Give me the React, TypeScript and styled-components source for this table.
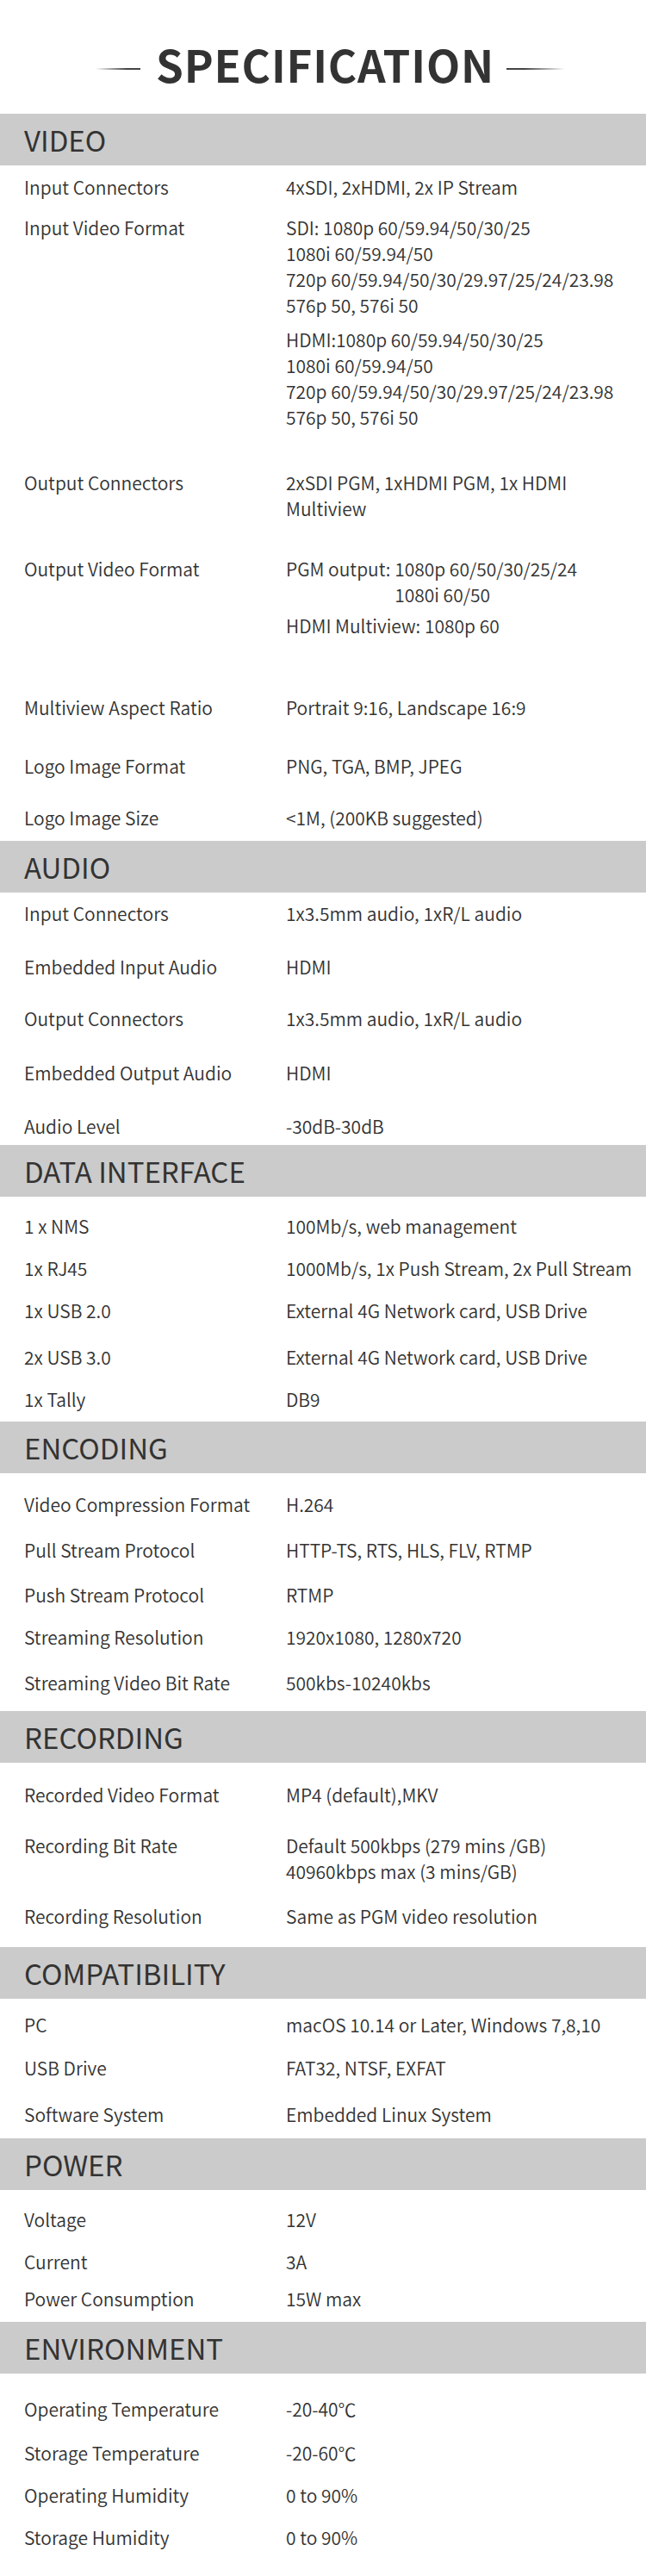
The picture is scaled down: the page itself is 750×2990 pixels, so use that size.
import React from "react";
import styled, { createGlobalStyle } from "styled-components";

const GlobalStyle = createGlobalStyle`
  html, body {
    margin: 0;
    padding: 0;
    background: #ffffff;
  }
  body {
    font-family: "Noto Sans CJK SC", "Noto Sans", "Liberation Sans", sans-serif;
    color: #333333;
  }
`;

const Page = styled.div`
  width: 750px;
  height: 2990px;
  background: #ffffff;
  overflow: hidden;
`;

const Header = styled.header`
  height: 132px;
  box-sizing: border-box;
  padding-top: 49px;
  padding-left: 17px;
  display: flex;
  justify-content: center;
  align-items: flex-start;
`;

const Title = styled.h1`
  margin: 0;
  font-size: 51px;
  line-height: 51px;
  font-weight: 700;
  color: #333333;
  letter-spacing: 0.8px;
`;

const Rule = styled.span<{ $side: "left" | "right" }>`
  display: block;
  margin-top: 30px;
  margin-right: ${(p) => (p.$side === "left" ? "18px" : "0")};
  margin-left: ${(p) => (p.$side === "right" ? "14px" : "0")};
  height: 2px;
  width: ${(p) => (p.$side === "left" ? "52px" : "68px")};
  background: ${(p) =>
    p.$side === "left"
      ? "linear-gradient(to right, rgba(60,60,60,0), #444 70%)"
      : "linear-gradient(to right, #444 30%, rgba(60,60,60,0))"};
`;

const Section = styled.section<{ $end: number }>`
  padding-bottom: ${(p) => p.$end}px;
`;

const Band = styled.h2`
  margin: 0;
  height: 60px;
  box-sizing: border-box;
  padding-left: 28px;
  background: #cbcbcb;
  font-size: 33px;
  line-height: 60px;
  font-weight: 400;
  color: #333333;
`;

const Row = styled.div<{ $gap: number }>`
  display: grid;
  grid-template-columns: 304px 1fr;
  padding-left: 28px;
  margin-top: ${(p) => p.$gap}px;
  font-size: 21px;
  line-height: 30px;
  font-weight: 350;
  color: #333333;
`;

const Label = styled.div`
  white-space: nowrap;
`;

const Value = styled.div`
  display: flex;
  flex-direction: column;
`;

const Block = styled.div<{ $gap?: number }>`
  margin-top: ${(p) => p.$gap ?? 0}px;
  white-space: nowrap;
`;

const Line = styled.div``;

const Split = styled.div<{ $gap?: number }>`
  display: flex;
  margin-top: ${(p) => p.$gap ?? 0}px;
  white-space: pre;
`;

type Spec = {
  label: string;
  gap: number;
  value: React.ReactNode;
};

type SectionData = {
  title: string;
  end: number;
  rows: Spec[];
};

const lines = (arr: string[]) => arr.map((t) => <Line key={t}>{t}</Line>);

const sections: SectionData[] = [
  {
    title: "VIDEO",
    end: 12,
    rows: [
      { label: "Input Connectors", gap: 10, value: "4xSDI, 2xHDMI, 2x IP Stream" },
      {
        label: "Input Video Format",
        gap: 17,
        value: (
          <>
            <Block>
              {lines([
                "SDI: 1080p 60/59.94/50/30/25",
                "1080i 60/59.94/50",
                "720p 60/59.94/50/30/29.97/25/24/23.98",
                "576p 50, 576i 50",
              ])}
            </Block>
            <Block $gap={10}>
              {lines([
                "HDMI:1080p 60/59.94/50/30/25",
                "1080i 60/59.94/50 ",
                "720p 60/59.94/50/30/29.97/25/24/23.98 ",
                "576p 50, 576i 50 ",
              ])}
            </Block>
          </>
        ),
      },
      {
        label: "Output Connectors",
        gap: 46,
        value: <Block>{lines(["2xSDI PGM, 1xHDMI PGM, 1x HDMI", "Multiview"])}</Block>,
      },
      {
        label: "Output Video Format",
        gap: 40,
        value: (
          <>
            <Split>
              <span>PGM output: </span>
              <span>
                <Line>1080p 60/50/30/25/24</Line>
                <Line>1080i 60/50</Line>
              </span>
            </Split>
            <Block $gap={6}>HDMI Multiview: 1080p 60</Block>
          </>
        ),
      },
      { label: "Multiview Aspect Ratio", gap: 65, value: "Portrait 9:16, Landscape 16:9" },
      { label: "Logo Image Format", gap: 38, value: "PNG, TGA, BMP, JPEG" },
      { label: "Logo Image Size", gap: 30, value: "<1M, (200KB suggested)" },
    ],
  },
  {
    title: "AUDIO",
    end: 7,
    rows: [
      { label: "Input Connectors", gap: 9, value: "1x3.5mm audio, 1xR/L audio" },
      { label: "Embedded Input Audio", gap: 32, value: "HDMI" },
      { label: "Output Connectors", gap: 30, value: "1x3.5mm audio, 1xR/L audio" },
      { label: "Embedded Output Audio", gap: 33, value: "HDMI" },
      { label: "Audio Level", gap: 32, value: "-30dB-30dB" },
    ],
  },
  {
    title: "DATA INTERFACE",
    end: 11,
    rows: [
      { label: "1 x NMS", gap: 19, value: "100Mb/s, web management" },
      { label: "1x RJ45", gap: 19, value: "1000Mb/s, 1x Push Stream, 2x Pull Stream" },
      { label: "1x USB 2.0", gap: 19, value: "External 4G Network card, USB Drive" },
      { label: "2x USB 3.0", gap: 24, value: "External 4G Network card, USB Drive" },
      { label: "1x Tally", gap: 19, value: "DB9" },
    ],
  },
  {
    title: "ENCODING",
    end: 18,
    rows: [
      { label: "Video Compression Format", gap: 21, value: "H.264" },
      { label: "Pull Stream Protocol", gap: 23, value: "HTTP-TS, RTS, HLS, FLV, RTMP" },
      { label: "Push Stream Protocol", gap: 22, value: "RTMP" },
      { label: "Streaming Resolution", gap: 19, value: "1920x1080, 1280x720" },
      { label: "Streaming Video Bit Rate", gap: 23, value: "500kbs-10240kbs" },
    ],
  },
  {
    title: "RECORDING",
    end: 21,
    rows: [
      { label: "Recorded Video Format", gap: 22, value: "MP4 (default),MKV" },
      {
        label: "Recording Bit Rate",
        gap: 29,
        value: <Block>{lines(["Default 500kbps (279 mins /GB)", "40960kbps max (3 mins/GB)"])}</Block>,
      },
      { label: "Recording Resolution", gap: 22, value: "Same as PGM video resolution" },
    ],
  },
  {
    title: "COMPATIBILITY",
    end: 13,
    rows: [
      { label: "PC", gap: 15, value: "macOS 10.14 or Later, Windows 7,8,10" },
      { label: "USB Drive", gap: 20, value: "FAT32, NTSF, EXFAT" },
      { label: "Software System", gap: 24, value: "Embedded Linux System" },
    ],
  },
  {
    title: "POWER",
    end: 12,
    rows: [
      { label: "Voltage", gap: 19, value: "12V" },
      { label: "Current", gap: 19, value: "3A" },
      { label: "Power Consumption", gap: 13, value: "15W max" },
    ],
  },
  {
    title: "ENVIRONMENT",
    end: 30,
    rows: [
      { label: "Operating Temperature", gap: 26, value: "-20-40℃" },
      { label: "Storage Temperature", gap: 21, value: "-20-60℃" },
      { label: "Operating Humidity", gap: 19, value: "0 to 90%" },
      { label: "Storage Humidity", gap: 19, value: "0 to 90%" },
    ],
  },
];

export default function App() {
  return (
    <>
      <GlobalStyle />
      <Page>
        <Header>
          <Rule $side="left" />
          <Title>SPECIFICATION</Title>
          <Rule $side="right" />
        </Header>
        {sections.map((s) => (
          <Section key={s.title} $end={s.end}>
            <Band>{s.title}</Band>
            {s.rows.map((r) => (
              <Row key={r.label} $gap={r.gap}>
                <Label>{r.label}</Label>
                <Value>{r.value}</Value>
              </Row>
            ))}
          </Section>
        ))}
      </Page>
    </>
  );
}
